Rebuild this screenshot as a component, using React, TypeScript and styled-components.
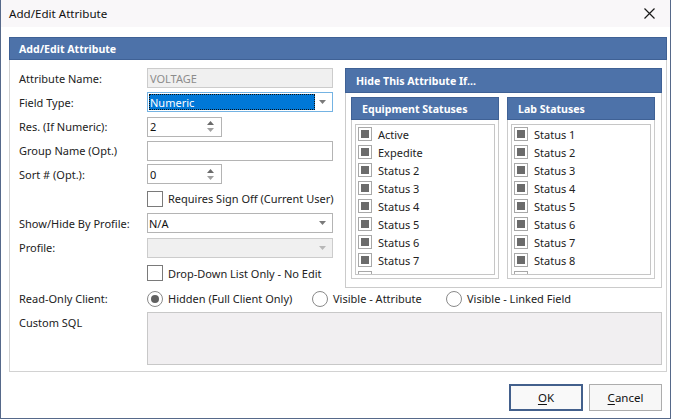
import React from "react"
import styled, { createGlobalStyle } from "styled-components"

const GlobalStyle = createGlobalStyle`
  body {
    margin: 0;
    background: #ffffff;
    font-family: "Noto Sans", "Segoe UI", sans-serif;
    font-size: 11px;
    color: #222;
    white-space: nowrap;
  }
`

const Window = styled.div`
  width: 671px;
  height: 419px;
  box-sizing: border-box;
  border: 1px solid #56698a;
  border-top: none;
  background: #fff;
  display: flex;
  flex-direction: column;
`

const TitleBar = styled.div`
  height: 27px;
  flex: none;
  background: #f9f7f9;
  display: flex;
  align-items: center;
  justify-content: space-between;
  padding: 0 15px 0 8px;
  font-size: 11.6px;
  color: #111;
`

const Content = styled.div`
  padding: 10px 3px 0 8px;
`

const Group = styled.div`
  width: 658px;
  height: 335px;
  box-sizing: border-box;
  border: 1px solid #d2d2d2;
  border-top: none;
`

const BlueHeader = styled.div<{ $h: number; $pad: number }>`
  height: ${(p) => p.$h}px;
  box-sizing: border-box;
  background: #4d72a9;
  border: 1px solid #3f6195;
  color: #fff;
  font-weight: 700;
  font-size: 10.6px;
  display: flex;
  align-items: center;
  padding-left: ${(p) => p.$pad}px;
  margin: 0 -1px;
`

const GroupBody = styled.div`
  padding: 6px 4px 0 9px;
`

const TopSection = styled.div`
  display: flex;
  gap: 12px;
`

const FormColumn = styled.div`
  width: 314px;
  display: flex;
  flex-direction: column;
`

const Row = styled.div<{ $h: number }>`
  height: ${(p) => p.$h}px;
  display: flex;
  align-items: center;
`

const Label = styled.div`
  width: 128px;
  flex: none;
  color: #222;
`

const TextBox = styled.div<{ $disabled?: boolean; $w?: number }>`
  width: ${(p) => p.$w ?? 186}px;
  height: 20px;
  box-sizing: border-box;
  border: 1px solid ${(p) => (p.$disabled ? "#cccccc" : "#b4b4b4")};
  background: ${(p) => (p.$disabled ? "#f0f0f0" : "#fff")};
  color: ${(p) => (p.$disabled ? "#8c8c8c" : "#111")};
  display: flex;
  align-items: center;
  padding: 0 2px;
`

const SelectBox = styled(TextBox)<{ $focused?: boolean }>`
  border-color: ${(p) => (p.$focused ? "#74b3e3" : p.$disabled ? "#cccccc" : "#b4b4b4")};
  padding: 0 1px;
  justify-content: space-between;
`

const Highlight = styled.div`
  height: 16px;
  width: 166px;
  box-sizing: border-box;
  background: #0078d7;
  color: #fff;
  outline: 1px dotted #111;
  outline-offset: -1px;
  display: flex;
  align-items: center;
  padding-left: 1px;
`

const Arrow = styled.svg`
  width: 7px;
  height: 4px;
  margin-right: 5px;
  flex: none;
`

const SpinArrows = styled.div`
  display: flex;
  flex-direction: column;
  gap: 3px;
  margin-left: auto;
  margin-right: 5px;
`

const CheckBox = styled.div`
  width: 16px;
  height: 16px;
  box-sizing: border-box;
  border: 1px solid #7a7a7a;
  background: #fff;
  flex: none;
`

const CheckLabel = styled.span`
  margin-left: 5px;
  color: #222;
`

const Spacer = styled.div`
  width: 128px;
  flex: none;
`

const HidePanel = styled.div`
  width: 317px;
  height: 220px;
  margin-top: 2px;
  box-sizing: border-box;
  border: 1px solid #cbcbcb;
  border-top: none;
`

const SubPanels = styled.div`
  display: flex;
  gap: 8px;
  padding: 4px 5px 0 5px;
`

const SubPanel = styled.div`
  width: 148px;
  height: 182px;
  box-sizing: border-box;
  border: 1px solid #cbcbcb;
  border-top: none;
`

const ListBox = styled.div`
  margin: 4px 3px 0 3px;
  height: 151px;
  box-sizing: border-box;
  border: 1px solid #c6c6c6;
  overflow: hidden;
  padding-left: 2px;
`

const ListItem = styled.div`
  height: 18px;
  flex: none;
  display: flex;
  align-items: center;
  gap: 6px;
  font-size: 11px;
`

const TriBox = styled.div`
  width: 14px;
  height: 14px;
  box-sizing: border-box;
  border: 1px solid #a8a8a8;
  background: #fff;
  display: flex;
  align-items: center;
  justify-content: center;
  flex: none;
  &::after {
    content: "";
    width: 8px;
    height: 8px;
    background: #6b6b6b;
  }
`

const RadioGroup = styled.div`
  display: flex;
  align-items: center;
`

const RadioOption = styled.div<{ $w: number }>`
  width: ${(p) => p.$w}px;
  display: flex;
  align-items: center;
  gap: 5px;
  flex: none;
`

const RadioCircle = styled.div<{ $on?: boolean }>`
  width: 16px;
  height: 16px;
  box-sizing: border-box;
  border: 1px solid #8a8a8a;
  border-radius: 50%;
  display: flex;
  align-items: center;
  justify-content: center;
  &::after {
    content: "";
    display: ${(p) => (p.$on ? "block" : "none")};
    width: 8px;
    height: 8px;
    border-radius: 50%;
    background: #606060;
  }
`

const SqlRow = styled.div`
  display: flex;
  margin-top: 3px;
`

const SqlLabel = styled(Label)`
  padding-top: 3px;
`

const SqlBox = styled.div`
  width: 515px;
  height: 53px;
  box-sizing: border-box;
  border: 1px solid #c8c8c8;
  background: #f1eff1;
`

const Footer = styled.div`
  display: flex;
  justify-content: flex-end;
  gap: 6px;
  padding: 12px 8px 0 0;
`

const Button = styled.div<{ $default?: boolean }>`
  width: ${(p) => (p.$default ? 74 : 73)}px;
  height: 27px;
  box-sizing: border-box;
  border: ${(p) => (p.$default ? "2px solid #43608c" : "1px solid #adadad")};
  background: ${(p) => (p.$default ? "#f9f9f9" : "#f7f7f7")};
  display: flex;
  align-items: center;
  justify-content: center;
  color: #111;
  font-size: 11.5px;
  u {
    text-decoration: underline;
    text-underline-offset: 2px;
  }
`

const DownArrow = ({ color = "#7a7a7a" }: { color?: string }) => (
  <Arrow viewBox="0 0 7 4">
    <path d="M0 0h7L3.5 4z" fill={color} />
  </Arrow>
)

const Spin = () => (
  <SpinArrows>
    <svg width="7" height="4" viewBox="0 0 7 4">
      <path d="M0 4h7L3.5 0z" fill="#6a6a6a" />
    </svg>
    <svg width="7" height="4" viewBox="0 0 7 4">
      <path d="M0 0h7L3.5 4z" fill="#a0a0a0" />
    </svg>
  </SpinArrows>
)

const equipment = ["Active", "Expedite", "Status 2", "Status 3", "Status 4", "Status 5", "Status 6", "Status 7", "Status 8"]
const lab = ["Status 1", "Status 2", "Status 3", "Status 4", "Status 5", "Status 6", "Status 7", "Status 8", "Status 9"]

function StatusList({ title, items }: { title: string; items: string[] }) {
  return (
    <SubPanel>
      <BlueHeader $h={23} $pad={10}>{title}</BlueHeader>
      <ListBox>
        {items.map((s, i) => (
          <ListItem key={i}>
            <TriBox />
            <span>{s}</span>
          </ListItem>
        ))}
      </ListBox>
    </SubPanel>
  )
}

export default function App() {
  return (
    <>
      <GlobalStyle />
      <Window>
        <TitleBar>
          <span>Add/Edit Attribute</span>
          <svg width="11" height="11" viewBox="0 0 11 11">
            <path d="M0.5 0.5l10 10M10.5 0.5l-10 10" stroke="#1a1a1a" strokeWidth="1.2" />
          </svg>
        </TitleBar>
        <Content>
          <Group>
            <BlueHeader $h={23} $pad={9}>Add/Edit Attribute</BlueHeader>
            <GroupBody>
              <TopSection>
                <FormColumn>
                  <Row $h={24}>
                    <Label>Attribute Name:</Label>
                    <TextBox $disabled>VOLTAGE</TextBox>
                  </Row>
                  <Row $h={24}>
                    <Label>Field Type:</Label>
                    <SelectBox $focused>
                      <Highlight>Numeric</Highlight>
                      <DownArrow />
                    </SelectBox>
                  </Row>
                  <Row $h={25}>
                    <Label>Res. (If Numeric):</Label>
                    <TextBox $w={75}>
                      2<Spin />
                    </TextBox>
                  </Row>
                  <Row $h={23}>
                    <Label>Group Name (Opt.)</Label>
                    <TextBox />
                  </Row>
                  <Row $h={24}>
                    <Label>Sort # (Opt.):</Label>
                    <TextBox $w={75}>
                      0<Spin />
                    </TextBox>
                  </Row>
                  <Row $h={25}>
                    <Spacer />
                    <CheckBox />
                    <CheckLabel>Requires Sign Off (Current User)</CheckLabel>
                  </Row>
                  <Row $h={24}>
                    <Label>Show/Hide By Profile:</Label>
                    <SelectBox>
                      N/A
                      <DownArrow />
                    </SelectBox>
                  </Row>
                  <Row $h={25}>
                    <Label>Profile:</Label>
                    <SelectBox $disabled>
                      <span />
                      <DownArrow color="#b8b8b8" />
                    </SelectBox>
                  </Row>
                  <Row $h={26}>
                    <Spacer />
                    <CheckBox />
                    <CheckLabel>Drop-Down List Only - No Edit</CheckLabel>
                  </Row>
                </FormColumn>
                <HidePanel>
                  <BlueHeader $h={25} $pad={10}>Hide This Attribute If...</BlueHeader>
                  <SubPanels>
                    <StatusList title="Equipment Statuses" items={equipment} />
                    <StatusList title="Lab Statuses" items={lab} />
                  </SubPanels>
                </HidePanel>
              </TopSection>
              <Row $h={21}>
                <Label>Read-Only Client:</Label>
                <RadioGroup>
                  <RadioOption $w={165}>
                    <RadioCircle $on />
                    <span>Hidden (Full Client Only)</span>
                  </RadioOption>
                  <RadioOption $w={134}>
                    <RadioCircle />
                    <span>Visible - Attribute</span>
                  </RadioOption>
                  <RadioOption $w={150}>
                    <RadioCircle />
                    <span>Visible - Linked Field</span>
                  </RadioOption>
                </RadioGroup>
              </Row>
              <SqlRow>
                <SqlLabel>Custom SQL</SqlLabel>
                <SqlBox />
              </SqlRow>
            </GroupBody>
          </Group>
        </Content>
        <Footer>
          <Button $default>
            <span><u>O</u>K</span>
          </Button>
          <Button>
            <span><u>C</u>ancel</span>
          </Button>
        </Footer>
      </Window>
    </>
  )
}
